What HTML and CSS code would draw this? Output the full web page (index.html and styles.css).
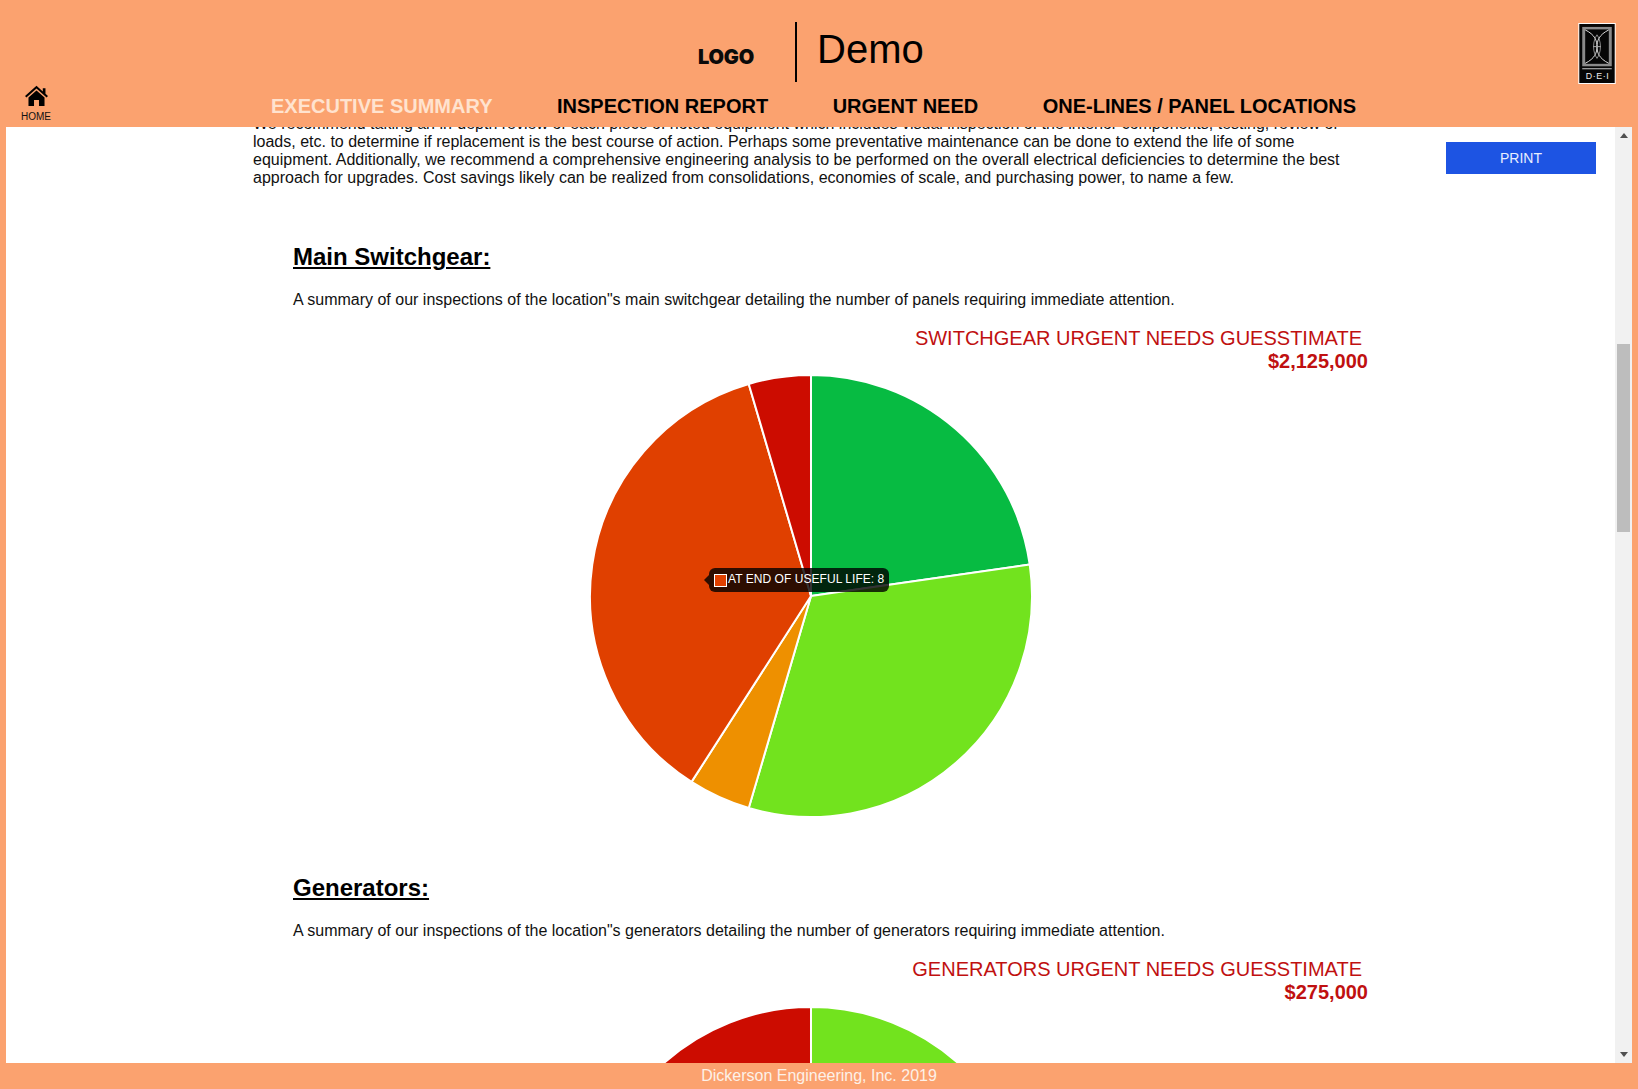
FILE: index.html
```html
<!DOCTYPE html>
<html lang="en">
<head>
<meta charset="utf-8">
<title>Demo</title>
<link rel="stylesheet" href="styles.css">
</head>
<body>
<header class="site-header">
  <a class="home" href="#">
    <svg class="home-icon" viewBox="0 0 24 22" aria-hidden="true">
      <path d="M12 .8 18.6 6.7V3.4H21.4V9.2L24 11.5 22.6 13 12 3.6 1.4 13 0 11.5Z"/>
      <path d="M12 5.8 20.4 13.2V22H14.6V15.6H9.4V22H3.6V13.2Z"/>
    </svg>
    <span class="home-label">HOME</span>
  </a>
  <div class="header-center">
    <div class="brand">
      <span class="brand-logo">LOGO</span>
      <span class="brand-rule"></span>
      <span class="brand-title">Demo</span>
    </div>
    <nav class="nav">
      <a class="nav-link is-active" href="#">EXECUTIVE SUMMARY</a>
      <a class="nav-link" href="#">INSPECTION REPORT</a>
      <a class="nav-link" href="#">URGENT NEED</a>
      <a class="nav-link" href="#">ONE-LINES / PANEL LOCATIONS</a>
    </nav>
  </div>
  <div class="dei">
    <svg class="dei-mark" viewBox="0 0 38 62" aria-hidden="true">
      <rect width="38" height="62" fill="#fff"/>
      <rect x="1" y="1" width="36" height="60" fill="#060606"/>
      <rect x="4" y="4" width="30" height="40" fill="#8a8a8a"/>
      <rect x="7" y="6.5" width="24" height="35" fill="#060606"/>
      <path d="M7 7C17 12 19 18 19 24S17 36 7 41M31 7C21 12 19 18 19 24S21 36 31 41" fill="none" stroke="#ddd" stroke-width="1"/>
      <path d="M15.5 24C15.5 19 17 15 19 12 21 15 22.5 19 22.5 24S21 33 19 36C17 33 15.5 29 15.5 24Z" fill="none" stroke="#aaa" stroke-width=".8"/>
      <path d="M15 24H23" stroke="#aaa" stroke-width="1"/>
      <path d="M4 46.5H34" stroke="#ccc" stroke-width="1"/>
      <text class="dei-text" x="19.5" y="57" text-anchor="middle">D·E·I</text>
    </svg>
  </div>
</header>

<div class="body-row">
  <main class="viewport">
    <div class="page">
      <article class="report">
        <p class="intro">We recommend taking an in-depth review of each piece of noted equipment which includes visual inspection of the interior components, testing, review of loads, etc. to determine if replacement is the best course of action. Perhaps some preventative maintenance can be done to extend the life of some equipment. Additionally, we recommend a comprehensive engineering analysis to be performed on the overall electrical deficiencies to determine the best approach for upgrades. Cost savings likely can be realized from consolidations, economies of scale, and purchasing power, to name a few.</p>

        <section class="section section-first">
          <h2 class="section-title">Main Switchgear:</h2>
          <p class="section-text">A summary of our inspections of the location"s main switchgear detailing the number of panels requiring immediate attention.</p>
          <div class="estimate">
            <div class="estimate-label">SWITCHGEAR URGENT NEEDS GUESSTIMATE</div>
            <div class="estimate-value">$2,125,000</div>
          </div>
          <div class="chart">
            <svg class="pie" viewBox="1 1 442 442" aria-hidden="true">
              <g class="slices">
                <path fill="#07bb42" d="M222 222V2A220 220 0 0 1 439.76 190.69Z"/>
                <path fill="#72e31e" d="M222 222 439.76 190.69A220 220 0 0 1 160.02 433.09Z"/>
                <path fill="#ee9000" d="M222 222 160.02 433.09A220 220 0 0 1 103.06 407.08Z"/>
                <path fill="#e04000" d="M222 222 103.06 407.08A220 220 0 0 1 160.02 10.91Z"/>
                <path fill="#cc0c00" d="M222 222 160.02 10.91A220 220 0 0 1 222 2Z"/>
              </g>
            </svg>
            <div class="tooltip">
              <span class="tooltip-swatch"></span>
              <span class="tooltip-text">AT END OF USEFUL LIFE: 8</span>
            </div>
          </div>
        </section>

        <section class="section">
          <h2 class="section-title">Generators:</h2>
          <p class="section-text">A summary of our inspections of the location"s generators detailing the number of generators requiring immediate attention.</p>
          <div class="estimate">
            <div class="estimate-label">GENERATORS URGENT NEEDS GUESSTIMATE</div>
            <div class="estimate-value">$275,000</div>
          </div>
          <div class="chart">
            <svg class="pie" viewBox="1 1 442 442" aria-hidden="true">
              <g class="slices">
                <path fill="#72e31e" d="M222 222V2A220 220 0 0 1 222 442Z"/>
                <path fill="#cc0c00" d="M222 222V442A220 220 0 0 1 222 2Z"/>
              </g>
            </svg>
          </div>
        </section>
      </article>
      <aside class="actions">
        <button class="print" type="button">PRINT</button>
      </aside>
    </div>
  </main>
  <div class="scrollbar" aria-hidden="true">
    <span class="arrow arrow-up"></span>
    <span class="thumb"></span>
    <span class="arrow arrow-down"></span>
  </div>
</div>

<footer class="site-footer">Dickerson Engineering, Inc. 2019</footer>
</body>
</html>
```
FILE: styles.css
```css
* { box-sizing: border-box; }

html, body { height: 100%; }

body {
  margin: 0;
  height: 100vh;
  overflow: hidden;
  display: flex;
  flex-direction: column;
  background: #fba26f;
  font-family: "Liberation Sans", Arial, sans-serif;
  color: #111;
}

/* Header */
.site-header {
  flex: none;
  height: 127px;
  display: flex;
}

.home {
  flex: none;
  width: 72px;
  padding-top: 85px;
  display: flex;
  flex-direction: column;
  align-items: center;
  color: #000;
  text-decoration: none;
}

.home-icon {
  width: 23px;
  height: 21px;
  fill: #000;
}

.home-label {
  margin-top: 5px;
  font-size: 10px;
  line-height: 11px;
  color: #111;
}

.header-center {
  flex: 1;
  min-width: 0;
}

.brand {
  height: 82px;
  padding: 22px 0 0 626px;
  display: flex;
  align-items: flex-start;
}

.brand-logo {
  width: 97px;
  margin-top: 24px;
  font-family: Inter, "Liberation Sans", sans-serif;
  font-size: 20px;
  font-weight: 900;
  line-height: 22px;
  letter-spacing: -0.2px;
  color: #0a0a0a;
}

.brand-rule {
  width: 2px;
  height: 60px;
  background: #000;
}

.brand-title {
  margin: 4px 0 0 20px;
  font-size: 40px;
  line-height: 46px;
  color: #000;
}

.nav {
  margin-top: 13px;
  padding-left: 199px;
  display: flex;
  gap: 64.5px;
}

.nav-link {
  font-size: 20px;
  font-weight: 700;
  line-height: 23px;
  color: #000;
  text-decoration: none;
}

.nav-link.is-active { color: #ffe3cf; }

.dei {
  flex: none;
  width: 60px;
  padding-top: 23px;
}

.dei-mark {
  display: block;
  width: 38px;
  height: 61px;
}

.dei-text {
  font-family: "Liberation Sans", Arial, sans-serif;
  font-size: 9px;
  letter-spacing: 0.6px;
  fill: #eee;
}

/* Main */
.body-row {
  flex: 1;
  min-height: 0;
  display: flex;
  margin: 0 6px;
}

.viewport {
  flex: 1;
  min-width: 0;
  overflow: hidden;
  background: #fff;
}

.page {
  margin-top: -12px;
  padding-left: 247px;
  display: flex;
}

.report {
  flex: none;
  width: 1117px;
}

.intro {
  margin: 0;
  font-size: 16px;
  line-height: 18px;
}

.section {
  padding-left: 40px;
  padding-top: 56px;
}

.section-title {
  margin: 0;
  font-size: 24px;
  font-weight: 700;
  line-height: 28px;
  color: #000;
  text-decoration: underline;
}

.section-text {
  margin: 20px 0 18px;
  font-size: 16px;
  line-height: 18px;
}

.estimate {
  padding-right: 2px;
  text-align: right;
  color: #c01010;
  font-size: 20px;
  line-height: 23px;
}

.estimate-label { padding-right: 6px; }

.estimate-value { font-weight: 700; }

.chart {
  position: relative;
  margin: 2px 42px 0 0;
  display: flex;
  justify-content: center;
}

.section-first .chart { margin-top: 1px; }

.pie {
  display: block;
  width: 444px;
  height: 444px;
  flex: none;
}

.slices path {
  stroke: #fff;
  stroke-width: 2;
  stroke-linejoin: round;
}

.tooltip {
  position: absolute;
  left: 416px;
  top: 194px;
  width: 180px;
  height: 24px;
  padding-left: 5px;
  display: flex;
  align-items: center;
  gap: 1px;
  border-radius: 6px;
  background: rgba(0, 0, 0, 0.8);
  color: #fff;
  font-size: 12px;
  line-height: 14px;
  white-space: nowrap;
}

.tooltip::before {
  content: "";
  position: absolute;
  left: -5px;
  top: 7px;
  border: 5px solid transparent;
  border-left: 0;
  border-right-color: rgba(0, 0, 0, 0.8);
}

.tooltip-swatch {
  flex: none;
  width: 13px;
  height: 13px;
  border: 1px solid #fff;
  background: #e04000;
}

.tooltip-text {
  padding-bottom: 3px;
  letter-spacing: 0.05px;
}

/* Print action */
.actions {
  flex: none;
  margin-left: 76px;
  padding-top: 27px;
}

.print {
  display: block;
  width: 150px;
  height: 32px;
  padding: 0;
  border: 0;
  background: #1d54e3;
  color: #e8eeff;
  font-family: inherit;
  font-size: 14px;
}

/* Scrollbar */
.scrollbar {
  flex: none;
  width: 17px;
  padding: 0 2px;
  display: flex;
  flex-direction: column;
  align-items: center;
  background: #f1f1f1;
  position: relative;
}

.arrow {
  position: absolute;
  left: 5px;
  border-left: 4px solid transparent;
  border-right: 4px solid transparent;
}

.arrow-up {
  top: 6px;
  border-bottom: 5px solid #505050;
}

.arrow-down {
  bottom: 6px;
  border-top: 5px solid #505050;
}

.thumb {
  width: 13px;
  height: 188px;
  margin-top: 217px;
  background: #bdbdbd;
}

/* Footer */
.site-footer {
  flex: none;
  height: 26px;
  text-align: center;
  font-size: 16px;
  line-height: 26px;
  color: #fdf1e8;
}
```
